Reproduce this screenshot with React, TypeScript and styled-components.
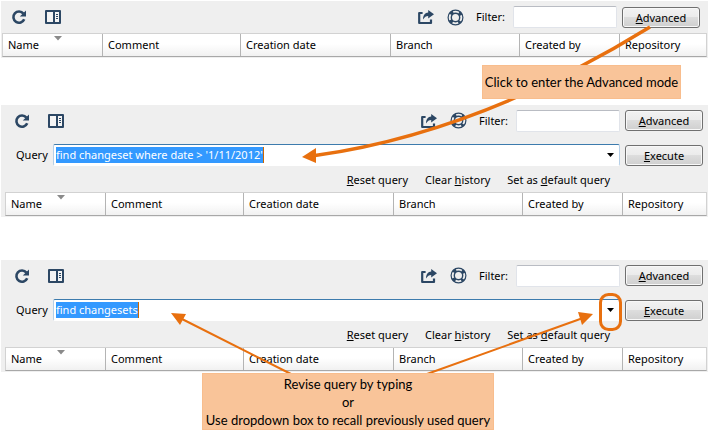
import React from "react";
import styled, { createGlobalStyle } from "styled-components";

const NAVY = "#2c4764";
const ORANGE = "#e8700f";

const GlobalStyle = createGlobalStyle`
  * { box-sizing: border-box; }
  body { margin: 0; background: #fff; }
  body, button, input { font: 11px/16px "Noto Sans", "Open Sans", sans-serif; color: #000; }
`;

const Page = styled.main`
  position: relative;
  display: flex;
  flex-direction: column;
  gap: 43px;
  padding: 1px 0 58px 1px;
  overflow: hidden;
`;

const Panel = styled.section<{ $first?: boolean }>`
  background: #efefef;
  padding: 0 1px 1px ${(p) => (p.$first ? 1 : 4)}px;
  margin-bottom: ${(p) => (p.$first ? 4 : 0)}px;
`;

const Toolbar = styled.div<{ $first?: boolean }>`
  display: flex;
  align-items: center;
  height: ${(p) => (p.$first ? 32 : 31)}px;
  padding: 0 ${(p) => (p.$first ? 7 : 4)}px 0 9px;
`;

const IconButton = styled.button<{ $gap?: number }>`
  display: flex;
  padding: 0;
  border: 0;
  background: none;
  color: ${NAVY};
  margin-right: ${(p) => p.$gap ?? 0}px;
`;

const Spacer = styled.div`
  flex: 1;
`;

const FilterLabel = styled.label`
  width: 37px;
  white-space: nowrap;
`;

const FilterInput = styled.input`
  width: 104px;
  height: 22px;
  margin-right: 5px;
  padding: 0 4px;
  border: 1px solid #e1e4ea;
  border-top-color: #b9bcc3;
  border-radius: 2px;
  background: #fff;
`;

const PushButton = styled.button`
  width: 78px;
  height: 21px;
  padding: 0;
  line-height: 17px;
  border: 1px solid #707070;
  border-radius: 3px;
  background: linear-gradient(#f2f2f2 0%, #ebebeb 49%, #dddddd 50%, #cfcfcf 100%);
  box-shadow: inset 0 0 0 1px #f8f8f8;
`;

const QueryRow = styled.div`
  display: flex;
  align-items: center;
  height: 38px;
  padding: 0 4px 0 11px;
`;

const QueryLabel = styled.label`
  width: 37px;
`;

const Combo = styled.div`
  flex: 1;
  display: flex;
  align-items: center;
  justify-content: space-between;
  height: 22px;
  margin-right: 5px;
  padding: 0 3px 0 2px;
  border: 1px solid #b5cfe7;
  border-top-color: #3d7bad;
  border-bottom-color: #fff;
  border-radius: 2px;
  background: #fff;
`;

const QueryInput = styled.input`
  field-sizing: content;
  height: 16px;
  padding: 0;
  border: 0;
  border-right: 1px solid #cc6600;
  outline: 0;
  background: #3399ff;
  color: #fff;
`;

const DropButton = styled.button`
  display: flex;
  padding: 2px;
  border: 0;
  background: none;
`;

const Actions = styled.div`
  display: flex;
  justify-content: flex-end;
  align-items: flex-start;
  gap: 17px;
  height: 18px;
  padding-right: 97px;
`;

const ActionButton = styled.button`
  padding: 0;
  border: 0;
  background: none;
  line-height: 12px;
  white-space: nowrap;
`;

const Table = styled.table`
  width: 100%;
  height: 24px;
  table-layout: fixed;
  border-collapse: separate;
  border-spacing: 0;
  background: linear-gradient(#fff 45%, #f1f1f1);
  border: 1px solid #d2d2d2;
  border-bottom-color: #a8a8a8;
`;

const HeaderCell = styled.th<{ $width?: number }>`
  position: relative;
  width: ${(p) => (p.$width ? `${p.$width}px` : "auto")};
  padding: 0 0 0 5px;
  font-weight: 400;
  text-align: left;
  white-space: nowrap;
  border-right: 1px solid #b4b4b4;
  &:last-child { border-right: 0; }
`;

const SortMark = styled.svg`
  position: absolute;
  top: 2px;
  left: 51px;
`;

const Annotations = styled.div`
  position: absolute;
  top: 0;
  right: 0;
  width: 708px;
  height: 430px;
  pointer-events: none;
`;

const Arrows = styled.svg`
  position: absolute;
  inset: 0;
`;

const Callout = styled.div<{ $x: number; $y: number; $w: number; $h: number }>`
  position: absolute;
  left: ${(p) => p.$x}px;
  top: ${(p) => p.$y}px;
  width: ${(p) => p.$w}px;
  height: ${(p) => p.$h}px;
  display: flex;
  flex-direction: column;
  align-items: center;
  justify-content: center;
  background: #f9c499;
  border: 1px solid #f8bd8d;
  font: 13px/18px Lato, sans-serif;
  white-space: nowrap;
`;

const RefreshIcon = () => (
  <svg width="16" height="16" viewBox="0 0 16 16" fill="none">
    <path d="M12.4 4.6A5.6 5.6 0 1 0 13.2 10.2" stroke="currentColor" strokeWidth="2.6" />
    <path d="M15 1.4V7.4H8.8Z" fill="currentColor" />
  </svg>
);

const PaneIcon = () => (
  <svg width="16" height="14" viewBox="0 0 16 14">
    <rect width="16" height="14" rx="1" fill="currentColor" />
    <path d="M2 2H8V12H2ZM10 2H14V12H10Z" fill="#f4f4f4" />
    <path d="M11 4.5H13M11 6.5H13M11 8.5H13" stroke="currentColor" />
  </svg>
);

const ShareIcon = () => (
  <svg width="16" height="16" viewBox="0 0 16 16" fill="none">
    <path d="M4.6 4H1.2V14H13V10.6" stroke="currentColor" strokeWidth="2.2" strokeLinejoin="round" />
    <path d="M10.2 1L16 5.3 10.2 9.6V7C8 7 6.6 8 5 10.6 5 6.4 7 3.8 10.2 3.6Z" fill="currentColor" />
  </svg>
);

const BuoyIcon = () => (
  <svg width="17" height="17" viewBox="0 0 17 17" fill="none" stroke="currentColor">
    <circle cx="8.5" cy="8.5" r="7.4" strokeWidth="1.2" />
    <circle cx="8.5" cy="8.5" r="4.2" strokeWidth="1.4" />
    <circle
      cx="8.5"
      cy="8.5"
      r="5.8"
      strokeWidth="3.6"
      strokeDasharray="3.6 5.51"
      strokeDashoffset="1.8"
      transform="rotate(45 8.5 8.5)"
    />
  </svg>
);

const columns: { title: string; width?: number }[] = [
  { title: "Name", width: 100 },
  { title: "Comment", width: 138 },
  { title: "Creation date", width: 150 },
  { title: "Branch", width: 129 },
  { title: "Created by", width: 100 },
  { title: "Repository" },
];

const ChangesetTable = () => (
  <Table>
    <thead>
      <tr>
        {columns.map((c, i) => (
          <HeaderCell key={c.title} $width={c.width} scope="col">
            {c.title}
            {i === 0 && (
              <SortMark width="8" height="5" viewBox="0 0 8 5">
                <path d="M0 0H8L4 4.5Z" fill="#8a8a8a" />
              </SortMark>
            )}
          </HeaderCell>
        ))}
      </tr>
    </thead>
  </Table>
);

function ChangesetPanel({ id, query }: { id: string; query?: string }) {
  const first = query === undefined;
  return (
    <Panel $first={first}>
      <Toolbar $first={first}>
        <IconButton aria-label="Refresh" $gap={18}><RefreshIcon /></IconButton>
        <IconButton aria-label="Toggle pane"><PaneIcon /></IconButton>
        <Spacer />
        <IconButton aria-label="Share" $gap={13}><ShareIcon /></IconButton>
        <IconButton aria-label="Help" $gap={12}><BuoyIcon /></IconButton>
        <FilterLabel htmlFor={`${id}-filter`}>Filter:</FilterLabel>
        <FilterInput id={`${id}-filter`} />
        <PushButton><u>A</u>dvanced</PushButton>
      </Toolbar>
      {!first && (
        <>
          <QueryRow>
            <QueryLabel htmlFor={`${id}-query`}>Query</QueryLabel>
            <Combo>
              <QueryInput id={`${id}-query`} defaultValue={query} />
              <DropButton aria-label="Previous queries">
                <svg width="7" height="4" viewBox="0 0 7 4"><path d="M0 0H7L3.5 4Z" /></svg>
              </DropButton>
            </Combo>
            <PushButton><u>E</u>xecute</PushButton>
          </QueryRow>
          <Actions>
            <ActionButton><u>R</u>eset query</ActionButton>
            <ActionButton>Clear <u>h</u>istory</ActionButton>
            <ActionButton>Set as <u>d</u>efault query</ActionButton>
          </Actions>
        </>
      )}
      <ChangesetTable />
    </Panel>
  );
}

export default function App() {
  return (
    <>
      <GlobalStyle />
      <Page>
        <ChangesetPanel id="simple" />
        <ChangesetPanel id="dated" query="find changeset where date > '1/11/2012'" />
        <ChangesetPanel id="all" query="find changesets" />
        <Annotations>
          <Arrows width="708" height="430" viewBox="0 0 708 430" fill="none" stroke={ORANGE}>
            <path d="M650 27Q478 133 315 155.5" strokeWidth="3.5" />
            <path d="M302 157L316 148V163Z" fill={ORANGE} stroke="none" />
            <path d="M291 374L182 319M427 374L583 318" strokeWidth="2" />
            <path d="M171 313L186 314 180 325ZM593 314L578 312 582 325Z" fill={ORANGE} stroke="none" />
            <rect x="600.5" y="294.5" width="20" height="35" rx="8" strokeWidth="3" />
          </Arrows>
          <Callout $x={482} $y={65} $w={199} $h={34}>Click to enter the Advanced mode</Callout>
          <Callout $x={202} $y={373} $w={292} $h={57}>
            <span>Revise query by typing</span>
            <span>or</span>
            <span>Use dropdown box to recall previously used query</span>
          </Callout>
        </Annotations>
      </Page>
    </>
  );
}
